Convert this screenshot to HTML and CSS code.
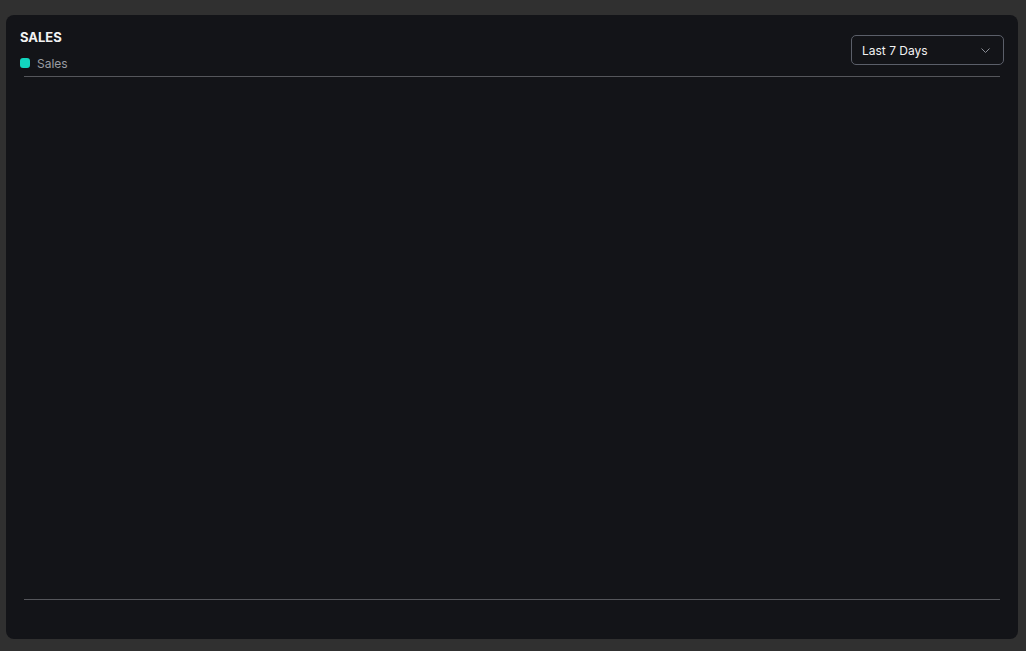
FILE: index.html
```html
<!DOCTYPE html>
<html lang="en">
<head>
  <meta charset="UTF-8" />
  <meta name="viewport" content="width=device-width, initial-scale=1" />
  <title>Sales</title>
  <link rel="stylesheet" href="styles.css">
</head>
<body>
  <div class="card">
    <div class="head">
      <div>
        <h2 class="title">SALES</h2>
        <div class="legend"><span class="dot"></span>Sales</div>
      </div>
      <button class="select">
        <span>Last 7 Days</span>
        <svg width="9" height="5" viewBox="0 0 9 5"><path d="M0.5 0.5l4 4 4-4" fill="none" stroke="#8a8d95" stroke-width="1"/></svg>
      </button>
    </div>
    <div class="chart"></div>
  </div>
</body>
</html>
```

FILE: styles.css
```css
* {
  box-sizing: border-box;
}
body {
  margin: 0;
  padding: 15px 8px 12px 6px;
  background-color: #303030;
  font-family: Inter, "Noto Sans", sans-serif;
  color: #f2f2f2;
}
.card {
  height: 624px;
  background-color: #131418;
  border-radius: 8px;
  padding: 14px 14px 39px;
  display: flex;
  flex-direction: column;
}
.head {
  display: flex;
  justify-content: space-between;
  align-items: flex-start;
}
.title {
  margin: 0;
  font-size: 13px;
  font-weight: 700;
  line-height: 17px;
}
.legend {
  margin-top: 8px;
  height: 18px;
  display: flex;
  align-items: center;
  gap: 7px;
  font-size: 12px;
  color: #9a9ca3;
}
.dot {
  width: 10px;
  height: 10px;
  border-radius: 3px;
  background-color: #12d6bf;
}
.select {
  margin-top: 6px;
  width: 153px;
  height: 30px;
  padding: 0 13px 0 10px;
  display: flex;
  align-items: center;
  justify-content: space-between;
  background: transparent;
  border: 1px solid #5b5f69;
  border-radius: 5px;
  color: #f2f2f2;
  font-family: inherit;
  font-size: 12px;
}
.chart {
  flex: 1;
  margin: 4px 4px 0;
  border-top: 1px solid #55565b;
  border-bottom: 1px solid #55565b;
}
```
